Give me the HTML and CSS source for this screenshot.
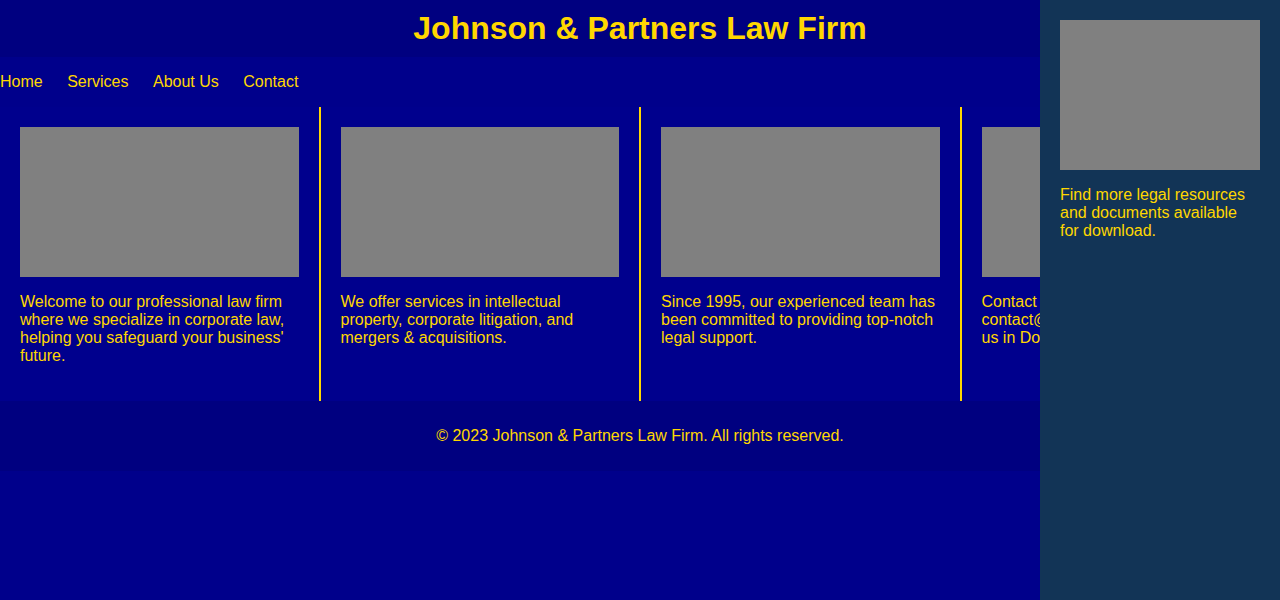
FILE: index.html
```html
<!DOCTYPE html>
<html lang="en">
<head>
<meta charset="utf-8">
<title>Johnson &amp; Partners Law Firm</title>
<link rel="stylesheet" href="styles.css">
</head>
<body>
<header class="site-header">
  <h1 class="site-title">Johnson &amp; Partners Law Firm</h1>
</header>
<nav class="site-nav">
  <ul class="nav-list">
    <li class="nav-item"><a class="nav-link" href="#">Home</a></li>
    <li class="nav-item"><a class="nav-link" href="#">Services</a></li>
    <li class="nav-item"><a class="nav-link" href="#">About Us</a></li>
    <li class="nav-item"><a class="nav-link" href="#">Contact</a></li>
  </ul>
</nav>
<main class="columns">
  <section class="column">
    <div class="placeholder"></div>
    <p class="column-text">Welcome to our professional law firm where we specialize in corporate law, helping you safeguard your business' future.</p>
  </section>
  <section class="column">
    <div class="placeholder"></div>
    <p class="column-text">We offer services in intellectual property, corporate litigation, and mergers &amp; acquisitions.</p>
  </section>
  <section class="column">
    <div class="placeholder"></div>
    <p class="column-text">Since 1995, our experienced team has been committed to providing top-notch legal support.</p>
  </section>
  <section class="column">
    <div class="placeholder"></div>
    <p class="column-text">Contact us for a free consultation at contact@johnsonpartners.com or visit us in Downtown Metropolis.</p>
  </section>
</main>
<footer class="site-footer">
  <p class="footer-text">&copy; 2023 Johnson &amp; Partners Law Firm. All rights reserved.</p>
</footer>
<aside class="sidebar">
  <div class="sidebar-image"></div>
  <p class="sidebar-text">Find more legal resources and documents available for download.</p>
</aside>
</body>
</html>
```
FILE: styles.css
```css
html, body {
  margin: 0;
  padding: 0;
}
body {
  background: #00008b;
  color: #ffd700;
  font-family: "Liberation Sans", Arial, sans-serif;
  font-size: 16px;
  min-height: 600px;
}
.site-header {
  background: #000080;
  padding: 10px 0;
  text-align: center;
}
.site-title {
  margin: 0;
  font-size: 32px;
  font-weight: bold;
  color: #ffd700;
}
.site-nav {
  background: #00008b;
}
.nav-list {
  list-style: none;
  margin: 16px 0;
  padding: 0;
}
.nav-item {
  display: inline;
  margin-right: 20px;
}
.nav-link {
  color: #ffd700;
  text-decoration: none;
}
.columns {
  display: flex;
  background: #00008d;
}
.column {
  flex: 1 1 0;
  padding: 20px;
  min-width: 0;
}
.column + .column {
  border-left: 2px solid #ffd700;
}
.placeholder {
  height: 150px;
  background: #808080;
}
.column-text {
  margin: 16px 0;
}
.site-footer {
  background: #000080;
  padding: 10px 0;
  text-align: center;
}
.footer-text {
  margin: 16px 0;
}
.sidebar {
  position: fixed;
  top: 0;
  right: 0;
  width: 200px;
  height: 560px;
  padding: 20px;
  background: #123456;
}
.sidebar-image {
  height: 150px;
  background: #808080;
}
.sidebar-text {
  margin: 16px 0;
}
```
